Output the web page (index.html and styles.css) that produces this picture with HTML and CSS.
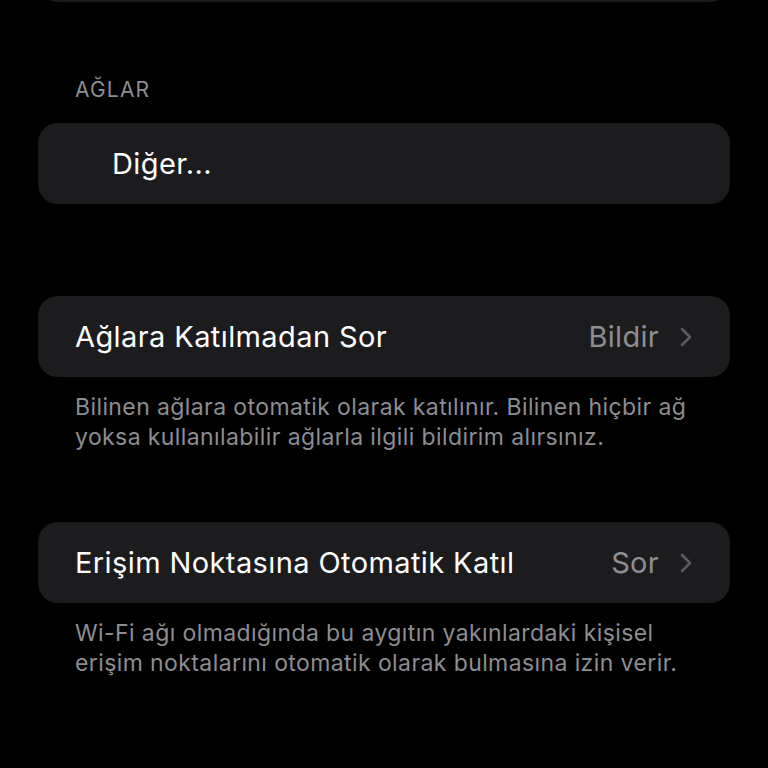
FILE: index.html
```html
<!DOCTYPE html>
<html lang="tr">

<head>
  <meta charset="UTF-8">
  <meta name="viewport" content="width=device-width, initial-scale=1.0">
  <title>Wi-Fi</title>
  <link rel="stylesheet" href="styles.css">
</head>

<body>
  <div class="settings">
    <div class="card card-top"></div>

    <div class="section-header">AĞLAR</div>
    <div class="card">
      <div class="row row-indent">
        <span class="label">Diğer...</span>
      </div>
    </div>

    <div class="card card-spaced">
      <div class="row">
        <span class="label">Ağlara Katılmadan Sor</span>
        <span class="value">Bildir</span>
        <svg class="chevron" viewBox="0 0 12 20" width="12" height="20">
          <path d="M2 2 L10 10 L2 18" fill="none" stroke="currentColor" stroke-width="2.6" stroke-linecap="round" stroke-linejoin="round" />
        </svg>
      </div>
    </div>
    <p class="footer">Bilinen ağlara otomatik olarak katılınır. Bilinen hiçbir ağ yoksa kullanılabilir ağlarla ilgili bildirim alırsınız.</p>

    <div class="card card-after-footer">
      <div class="row">
        <span class="label">Erişim Noktasına Otomatik Katıl</span>
        <span class="value">Sor</span>
        <svg class="chevron" viewBox="0 0 12 20" width="12" height="20">
          <path d="M2 2 L10 10 L2 18" fill="none" stroke="currentColor" stroke-width="2.6" stroke-linecap="round" stroke-linejoin="round" />
        </svg>
      </div>
    </div>
    <p class="footer">Wi-Fi ağı olmadığında bu aygıtın yakınlardaki kişisel erişim noktalarını otomatik olarak bulmasına izin verir.</p>
  </div>
</body>

</html>
```

FILE: styles.css
```css
body {
  margin: 0;
  padding: 0;
  background-color: #000;
  font-family: Inter, Roboto, "Noto Sans", sans-serif;
  color: #fff;
  overflow: hidden;
}

.settings {
  padding: 0 38px;
}

.card {
  background-color: #1c1c1e;
  border-radius: 20px;
}

.card-top {
  height: 40px;
  margin-top: -38px;
}

.section-header {
  margin: 76px 0 21px 37px;
  font-size: 21px;
  line-height: 24px;
  color: #8d8d92;
  letter-spacing: 1.2px;
}

.row {
  display: flex;
  align-items: center;
  height: 81px;
  padding: 0 38px 0 37px;
}

.row-indent {
  padding-left: 74px;
}

.label {
  flex: 1;
  font-size: 29px;
  letter-spacing: 0.4px;
}

.value {
  font-size: 29px;
  color: #8d8d92;
  margin-right: 21px;
  letter-spacing: 0.3px;
}

.chevron {
  color: #5b5b5f;
}

.card-spaced {
  margin-top: 92px;
}

.card-after-footer {
  margin-top: 70px;
}

.footer {
  margin: 15px 0 0 37px;
  padding-right: 40px;
  font-size: 23px;
  line-height: 30px;
  color: #8d8d92;
  letter-spacing: 0.4px;
}
```
